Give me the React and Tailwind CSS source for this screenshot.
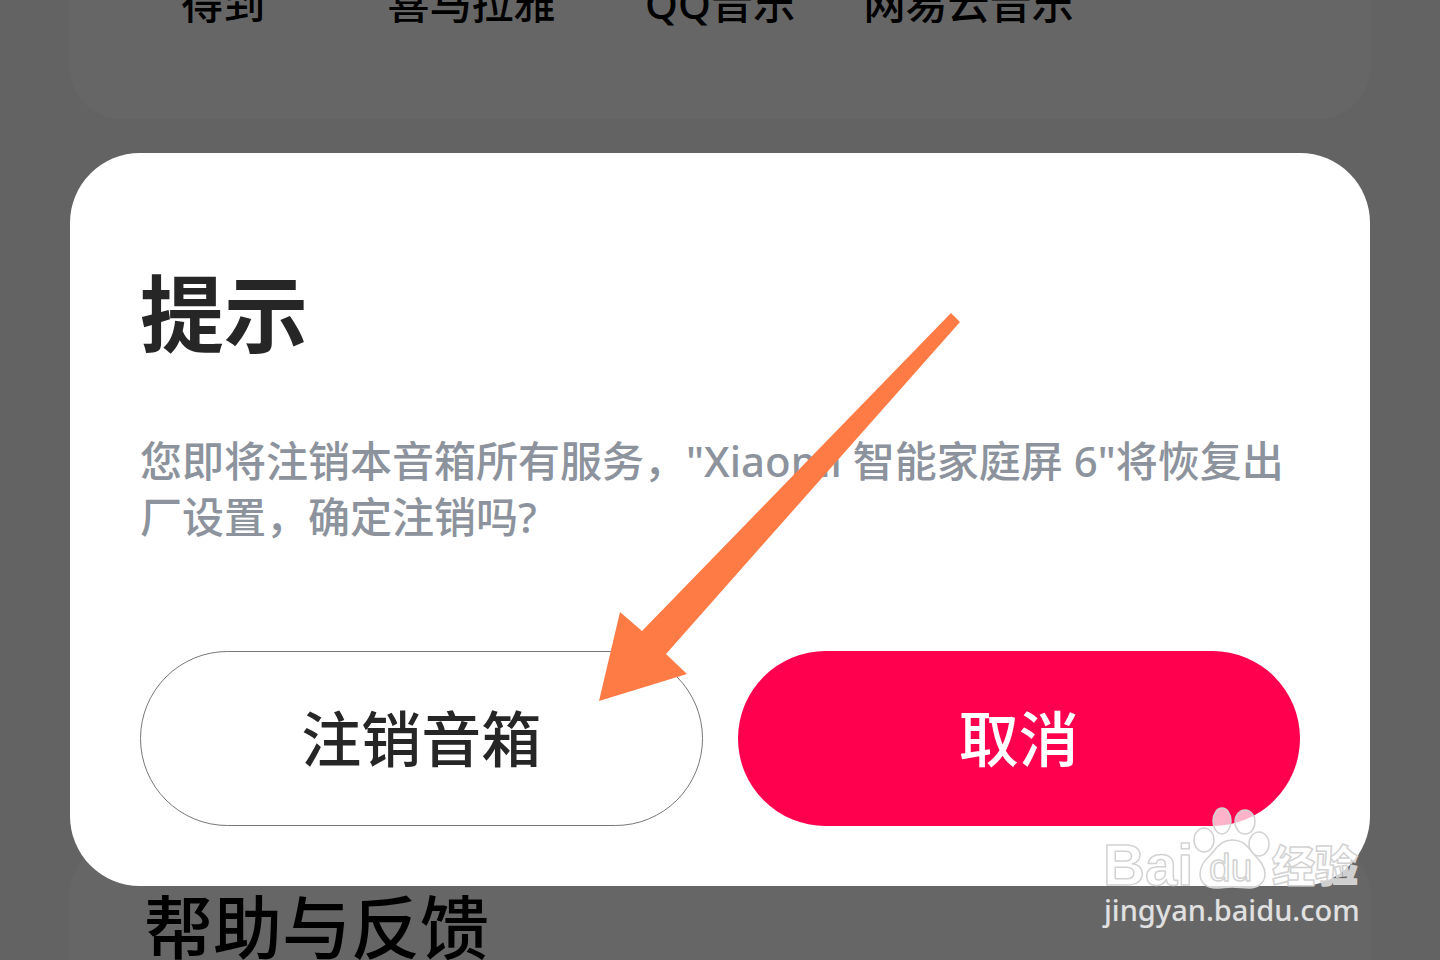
const apps = ["得到", "喜马拉雅", "QQ音乐", "网易云音乐"];

function Arrow() {
  return (
    <svg
      viewBox="0 0 361 388"
      className="absolute left-[529px] top-[160px] w-[361px] h-[388px] pointer-events-none"
      fill="#ff7b46"
      aria-hidden="true"
    >
      <path d="M352 0 L361 9 L67 341 L88 361 L0 388 L21 299 L43 318 Z" />
    </svg>
  );
}

function Watermark() {
  return (
    <div className="absolute right-[76px] bottom-[32px] pointer-events-none text-white/80">
      <svg viewBox="0 0 260 92" className="block w-[260px] h-[92px]">
        <g
          fill="#ffffff"
          fillOpacity="0.7"
          stroke="#d2d2d2"
          strokeWidth="1.5"
          strokeLinejoin="round"
        >
          <text
            x="-1"
            y="85"
            fontSize="58"
            fontWeight="700"
            fontFamily="'Liberation Sans', sans-serif"
          >
            Bai
          </text>
          <ellipse cx="100" cy="40" rx="10" ry="12" />
          <ellipse cx="118" cy="21" rx="9" ry="13" />
          <ellipse cx="141" cy="22" rx="10" ry="12" />
          <ellipse cx="155" cy="44" rx="10" ry="12" />
          <path d="M128 40 C119 40 114 45 110 51 C104 58 96 63 96 74 C96 83 103 88 112 88 C118 88 122 87 128 87 C135 87 139 88 145 88 C154 88 161 83 161 74 C161 65 154 59 148 52 C143 45 138 40 128 40 Z" />
          <text
            x="105"
            y="81"
            fontSize="39"
            fontWeight="400"
            fontFamily="'Liberation Sans', sans-serif"
          >
            du
          </text>
          <text
            x="168"
            y="82"
            fontSize="43"
            fontWeight="900"
            fontFamily="'Noto Sans CJK SC', sans-serif"
          >
            经验
          </text>
        </g>
      </svg>
      <p className="font-['Noto_Sans','Open_Sans',sans-serif] text-[29px] leading-[36px] font-medium whitespace-nowrap">
        jingyan.baidu.com
      </p>
    </div>
  );
}

function Dialog() {
  return (
    <div
      role="dialog"
      aria-modal="true"
      aria-labelledby="dialog-title"
      className="relative mx-[70px] mt-[153px] px-[70px] pt-[119px] pb-[60px] bg-white rounded-[70px]"
    >
      <h1
        id="dialog-title"
        className="text-[84px] leading-[84px] font-bold text-[#262626]"
      >
        提示
      </h1>
      <p className="mt-[77px] text-[42px] leading-[56px] font-medium text-[#8c939d]">
        您即将注销本音箱所有服务，"Xiaomi 智能家庭屏 6"将恢复出厂设置，确定注销吗?
      </p>
      <div className="mt-[106px] grid grid-cols-2 gap-[35px] text-[60px] font-medium">
        <button
          type="button"
          className="h-[175px] rounded-full border border-[#777777] text-[#262626]"
        >
          注销音箱
        </button>
        <button
          type="button"
          className="h-[175px] rounded-full bg-[#ff004f] text-white"
        >
          取消
        </button>
      </div>
      <Arrow />
    </div>
  );
}

export default function App() {
  return (
    <div className="relative h-screen overflow-hidden bg-[#f7f7f7] font-['Noto_Sans','Noto_Sans_CJK_SC',sans-serif]">
      <main className="flex flex-col h-full px-[70px]">
        <section className="flex flex-col justify-end shrink-0 h-[119px] px-[29px] pb-[88px] rounded-b-[52px] bg-white">
          <ul className="grid grid-cols-5 shrink-0 text-center text-[42px] leading-[56px] font-medium text-black whitespace-nowrap">
            {apps.map((name) => (
              <li key={name}>{name}</li>
            ))}
          </ul>
        </section>
        <section className="shrink-0 mt-[723px] px-[74px] pt-[50px] pb-[60px] rounded-t-[52px] bg-white">
          <h2 className="text-[69px] leading-[70px] font-medium text-black">
            帮助与反馈
          </h2>
        </section>
      </main>

      <div className="absolute inset-0 bg-black/60">
        <Dialog />
      </div>
      <Watermark />
    </div>
  );
}
